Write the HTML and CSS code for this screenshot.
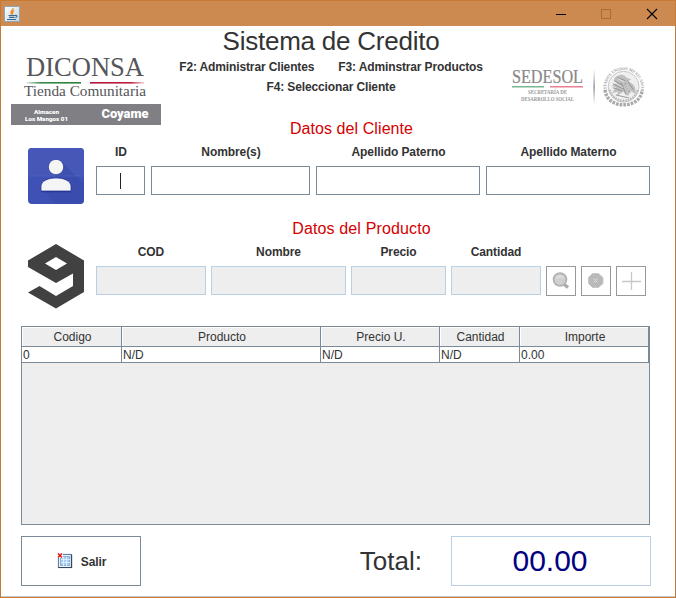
FILE: index.html
```html
<!DOCTYPE html>
<html lang="es">
<head>
<meta charset="utf-8">
<title>Sistema de Credito</title>
<link rel="stylesheet" href="styles.css">
</head>
<body>
<div class="window">
  <div class="titlebar">
    <svg class="java" width="16" height="16" viewBox="0 0 16 16">
      <defs><linearGradient id="jbg" x1="0" y1="0" x2="1" y2="1"><stop offset="0" stop-color="#fff"/><stop offset="1" stop-color="#c3d3df"/></linearGradient></defs>
      <rect x=".5" y=".5" width="15" height="15" fill="url(#jbg)" stroke="#91a4b0"/>
      <path d="M9 2.200C9.500 4 5.500 5 7.600 8.500M10 4.500C7.500 5.800 8.500 7 8.800 8.500" fill="none" stroke="#ee8b22" stroke-width="1.400"/>
      <path d="M4.500 9.500h6.500M5 11.300h5.500M3 13.500h9M11 9.500c2.500-.5 2.500 1.500.3 2" fill="none" stroke="#386a91" stroke-width="1.200"/>
    </svg>
    <svg class="controls" width="104" height="12" viewBox="0 0 104 12">
      <path d="M1 6.500h10" stroke="#000"/>
      <rect x="46.500" y="1.500" width="9" height="9" fill="none" stroke="#a56c3a"/>
      <path d="M92 1l10 10M102 1l-10 10" stroke="#000" stroke-width="1.100"/>
    </svg>
  </div>

  <header class="header">
    <svg class="diconsa" width="150" height="72" viewBox="0 -2 150 72">
      <defs>
        <linearGradient id="gr"><stop offset="0" stop-color="#3b8a48" stop-opacity=".2"/><stop offset=".25" stop-color="#3b8a48"/><stop offset="1" stop-color="#2e7d3e"/></linearGradient>
        <linearGradient id="rd"><stop offset="0" stop-color="#b0153a"/><stop offset=".75" stop-color="#c02040"/><stop offset="1" stop-color="#c02040" stop-opacity=".2"/></linearGradient>
      </defs>
      <text class="logo-serif" x="15" y="20.500" font-size="27" textLength="118" lengthAdjust="spacingAndGlyphs">DICONSA</text>
      <rect x="16" y="27" width="54" height="1.600" fill="url(#gr)"/>
      <rect x="79" y="27" width="54" height="1.600" fill="url(#rd)"/>
      <text class="logo-serif" x="13" y="41" font-size="15" textLength="122" lengthAdjust="spacingAndGlyphs">Tienda Comunitaria</text>
      <rect x="0" y="49" width="150" height="21" fill="#808084"/>
      <text class="logo-sans" x="23" y="59" font-size="6" textLength="25" lengthAdjust="spacingAndGlyphs">Almacen</text>
      <text class="logo-sans" x="14" y="66" font-size="6" textLength="43" lengthAdjust="spacingAndGlyphs">Los Mangos 01</text>
      <text class="logo-sans" x="90.500" y="63" font-size="12.500" textLength="47" lengthAdjust="spacingAndGlyphs">Coyame</text>
    </svg>

    <div class="heading">
      <h1>Sistema de Credito</h1>
      <div class="keys"><span>F2: Administrar Clientes</span><span>F3: Adminstrar Productos</span></div>
      <div class="keys">F4: Seleccionar Cliente</div>
    </div>

    <svg class="sedesol" width="137" height="50" viewBox="0 0 137 50">
      <defs>
        <linearGradient id="bar" x1="0" y1="0" x2="0" y2="1"><stop offset="0" stop-color="#888" stop-opacity="0"/><stop offset=".5" stop-color="#777"/><stop offset="1" stop-color="#888" stop-opacity="0"/></linearGradient>
        <path id="arc" d="M5.300 29A16.800 16.800 0 1 1 37.700 29"/>
      </defs>
      <text class="sed" x="1" y="20" font-size="18" textLength="71" lengthAdjust="spacingAndGlyphs">SEDESOL</text>
      <rect x="1" y="23" width="32" height="1.500" fill="#78b592"/>
      <rect x="39" y="23" width="33" height="1.500" fill="#e87f94"/>
      <text class="sed-sub" x="17" y="31" font-size="5.500" textLength="39" lengthAdjust="spacingAndGlyphs">SECRETARÍA DE</text>
      <text class="sed-sub" x="10" y="38" font-size="5.500" textLength="53" lengthAdjust="spacingAndGlyphs">DESARROLLO SOCIAL</text>
      <rect x="82.500" y="6" width="1.200" height="36" fill="url(#bar)"/>
      <g transform="translate(90.500 -1) scale(1.030)">
        <text class="seal-text" font-size="4.200"><textPath href="#arc" textLength="60" lengthAdjust="spacingAndGlyphs">ESTADOS UNIDOS MEXICANOS</textPath></text>
        <circle cx="21.500" cy="24" r="15" fill="#efefef" stroke="#bcbcbc" stroke-width=".8"/>
        <path d="M3.500 27C5 46.500 38 46.500 39.500 27" fill="none" stroke="#aaa" stroke-width="3.400" stroke-dasharray="2.600 1"/>
        <path d="M8 27C11 41 32 41 35 27" fill="none" stroke="#b5b5b5" stroke-width="2" stroke-dasharray="1.500 1"/>
        <path d="M13 15c5-4 9-3 11 0l5 2-4 2c6 1 9 6 8 12l-5-3-2 5-5-4-6 4 1-4-6 1 4-5-4-2 5-3-3-2z" fill="#c0c0c0"/>
        <path d="M12 18l9 5M11 21l10 5M11 25l9 3M25 18l6 9M22 19l6 11M19 20l5 12M15 15l8 3M14 32l13 3" fill="none" stroke="#929292" stroke-width=".9"/>
        <path d="M16 16l7 4M13 20l8 5M24 22l3 6" fill="none" stroke="#f5f5f5" stroke-width=".6"/>
      </g>
    </svg>
  </header>

  <main>
    <h2 class="title-client">Datos del Cliente</h2>
    <section class="row client">
      <svg class="row-icon" width="58" height="58" viewBox="0 0 58 58">
        <rect x="1" y="1" width="56" height="56" rx="4" fill="#3f51b5"/>
        <path d="M1 29V5a4 4 0 0 1 4-4h48a4 4 0 0 1 4 4v24z" fill="#4657b8"/>
        <path d="M34 14l23 23v16a4 4 0 0 1-4 4H29L15 43l14-13z" fill="#3748a8" opacity=".55"/>
        <circle cx="29" cy="20" r="7.700" fill="#f5f5f5" stroke="#2b3b9b" stroke-width=".8"/>
        <path d="M14 44v-4.500C14 28 44 28 44 39.500V44z" fill="#f5f5f5" stroke="#2b3b9b" stroke-width=".8"/>
        <path d="M14 44.700h30" stroke="#25338e"/>
        <path d="M1.500 29h55" stroke="#5a69c0" stroke-width=".5"/>
      </svg>
      <label class="f-id"><span>ID</span><span class="field active"><i class="caret"></i></span></label>
      <label class="f-name"><span>Nombre(s)</span><span class="field"></span></label>
      <label class="f-last"><span>Apellido Paterno</span><span class="field"></span></label>
      <label class="f-last"><span>Apellido Materno</span><span class="field"></span></label>
    </section>

    <h2 class="title-product">Datos del Producto</h2>
    <section class="row product">
      <svg class="row-icon nine" width="58" height="66" viewBox="0 0 58 66">
        <path fill-rule="evenodd" d="M29 1L57 17.500V49L29 65.500 1 49.500 12.500 43 29 53 46 43V30.500L29 40 1 24V17.500ZM29 14L18 20.500 29 27 40 20.500Z" fill="#414141"/>
      </svg>
      <label class="p-cod"><span>COD</span><span class="field off"></span></label>
      <label class="p-name"><span>Nombre</span><span class="field off"></span></label>
      <label class="p-price"><span>Precio</span><span class="field off"></span></label>
      <label class="p-qty"><span>Cantidad</span><span class="field off"></span></label>
      <button class="tool" disabled aria-label="Buscar">
        <svg width="18" height="18" viewBox="0 0 18 18"><path d="M11 11.500l5 4" stroke="#aaa" stroke-width="3.400"/><circle cx="8" cy="7.500" r="6.400" fill="#cfcfcf" stroke="#b2b2b2" stroke-width="1.800"/><path d="M4.500 7a4 3 0 0 1 7-1.500" stroke="#e2e2e2" stroke-width="1.500" fill="none"/></svg>
      </button>
      <button class="tool" disabled aria-label="Quitar">
        <svg width="18" height="18" viewBox="0 0 18 18"><path d="M5.500 1.500h6l4.500 4v6l-4.500 4h-6L1.500 11.500v-6z" fill="#b9b9b9" stroke="#c8c8c8"/><path d="M6.500 6.500l4 4M10.500 6.500l-4 4" stroke="#dedede"/></svg>
      </button>
      <button class="tool" disabled aria-label="Agregar">
        <svg width="20" height="20" viewBox="0 0 20 20"><path d="M10.500 1v18M1 10.500h19" stroke="#c8c8c8" stroke-width="1.300"/></svg>
      </button>
    </section>

    <div class="table-pane">
      <table>
        <colgroup><col class="c1"><col class="c2"><col class="c3"><col class="c4"><col class="c5"></colgroup>
        <thead><tr><th>Codigo</th><th>Producto</th><th>Precio U.</th><th>Cantidad</th><th>Importe</th></tr></thead>
        <tbody><tr><td>0</td><td>N/D</td><td>N/D</td><td>N/D</td><td>0.00</td></tr></tbody>
      </table>
    </div>

    <footer class="footer">
      <button class="exit">
        <svg width="16" height="16" viewBox="0 0 16 16">
          <rect x="1.500" y="1.500" width="13" height="13" fill="#fff" stroke="#5c7fa6" stroke-width="1.200"/>
          <path d="M14.500 2v12.500H1.500" fill="none" stroke="#33475f" stroke-width="1.200"/>
          <rect x="3.500" y="3.500" width="9" height="9" fill="#a6ccf0" stroke="#76a3d0" stroke-width=".8"/>
          <path d="M4 6.500h9M4 9.500h9M6.500 4v9M9.500 4v9" stroke="#e6f2fd" stroke-width=".8"/>
          <rect x="0" y="0" width="6" height="5" fill="#fff"/>
          <path d="M1 .5l4 4M5 .5L1 4.500" stroke="#e01414" stroke-width="1.500"/>
        </svg>
        <span>Salir</span>
      </button>
      <span class="total-label">Total:</span>
      <output class="total">00.00</output>
    </footer>
  </main>
</div>
</body>
</html>
```
FILE: styles.css
```css
* { box-sizing: border-box; }
body { margin: 0; font-family: "Liberation Sans", Arial, sans-serif; font-size: 12px; color: #333; }
h1, h2 { margin: 0; font-weight: normal; }
.window {
  width: 676px; height: 598px; overflow: hidden; background: #fff;
  border: 1px solid #c87a35; display: flex; flex-direction: column;
  box-shadow: inset 0 -1px #c4cbd3;
}
.titlebar {
  height: 25px; flex: none; background: #cc8a50; display: flex;
  justify-content: space-between; align-items: center; padding: 0 16px 0 3px;
}
.header { display: grid; grid-template-columns: 150px 340px 149px; height: 93px; padding-left: 10px; flex: none; }
.diconsa { margin-top: 27px; overflow: visible; }
.sedesol { margin: 37px 0 0 10px; overflow: visible; }
.logo-serif { font-family: "Liberation Serif", serif; fill: #55565a; }
.logo-sans { font-family: Roboto, sans-serif; font-weight: 900; fill: #fff; }
.sed { font-family: "Liberation Serif", serif; fill: #888; stroke: #888; stroke-width: .2px; }
.sed-sub { font-family: "Liberation Serif", serif; font-weight: bold; fill: #999; }
.seal-text { font-family: "Liberation Serif", serif; font-weight: bold; fill: #a0a0a0; }
.heading { text-align: center; }
h1 { font-size: 26px; line-height: 31px; letter-spacing: -.24px; }
.keys { display: flex; justify-content: center; gap: 24px; font-weight: bold; line-height: 20px; letter-spacing: -.13px; }

main { padding: 0 25px 0 20px; display: flex; flex-direction: column; }
h2 { font-size: 16px; line-height: 20px; color: #d40000; text-align: center; letter-spacing: .08px; }
.title-client { padding-left: 32px; }
.title-product { padding-left: 52px; margin-top: 24px; letter-spacing: .14px; }
.row { display: flex; gap: 5px; height: 57px; margin-top: -1px; }
.row > * { flex: none; }
.row label { display: flex; flex-direction: column; align-items: flex-start; font-weight: bold; line-height: 14px; padding-top: 7px; letter-spacing: -.08px; }
.row label > span:first-child { width: 100%; text-align: center; }
.row-icon { margin: 9px 6px 0; }
.row-icon.nine { margin-top: 5px; }
.field { display: flex; justify-content: center; align-items: center; width: calc(100% - 1px); height: 29px; border: 1px solid #7a8a99; margin-top: 7px; }
.field.off { width: 100%; height: 30px; background: #eee; border-color: #b8cfe5; }
.caret { width: 1px; height: 16px; background: #222; }
.f-id { width: 50px; }
.f-name { width: 160px; }
.f-last { width: 165px; }
.p-cod { width: 110px; }
.p-name { width: 135px; }
.p-price { width: 95px; }
.p-qty { width: 90px; }
.tool { width: 30px; height: 30px; margin-top: 28px; padding: 0; border: 1px solid #999; background: #fff; display: flex; align-items: center; justify-content: center; }

.table-pane { width: 629px; height: 199px; margin-top: 31px; background: #eee; border: 1px solid #7a8a99; }
table { table-layout: fixed; width: 627px; border-collapse: separate; border-spacing: 0; }
th, td { font-weight: normal; padding: 0; border-right: 1px solid #7a8a99; border-bottom: 1px solid #7a8a99; }
th { height: 20px; line-height: 17px; padding-top: 2px; padding-left: 2px; box-shadow: inset 1px 1px #fff; }
td { height: 16px; line-height: 14px; background: #fff; padding: 1px 0 0 1px; }
.c1 { width: 100px; }
.c2 { width: 199px; }
.c3 { width: 119px; }
.c4 { width: 80px; }
.c5 { width: 129px; }

.footer { display: flex; align-items: center; height: 50px; width: 630px; margin-top: 11px; }
.exit { width: 120px; height: 50px; padding: 0 0 0 1px; border: 1px solid #7a8a99; background: #fff; color: #333; font: bold 12px "Liberation Sans", Arial, sans-serif; letter-spacing: -.1px; display: flex; align-items: center; justify-content: center; gap: 8px; }
.exit span { padding-top: 2px; }
.total-label { margin-left: auto; margin-right: 29px; font-size: 26px; line-height: 30px; }
.total { width: 200px; height: 50px; padding-right: 2px; border: 1px solid #b8cfe5; font-size: 30px; line-height: 47px; text-align: center; color: #000080; }
```
